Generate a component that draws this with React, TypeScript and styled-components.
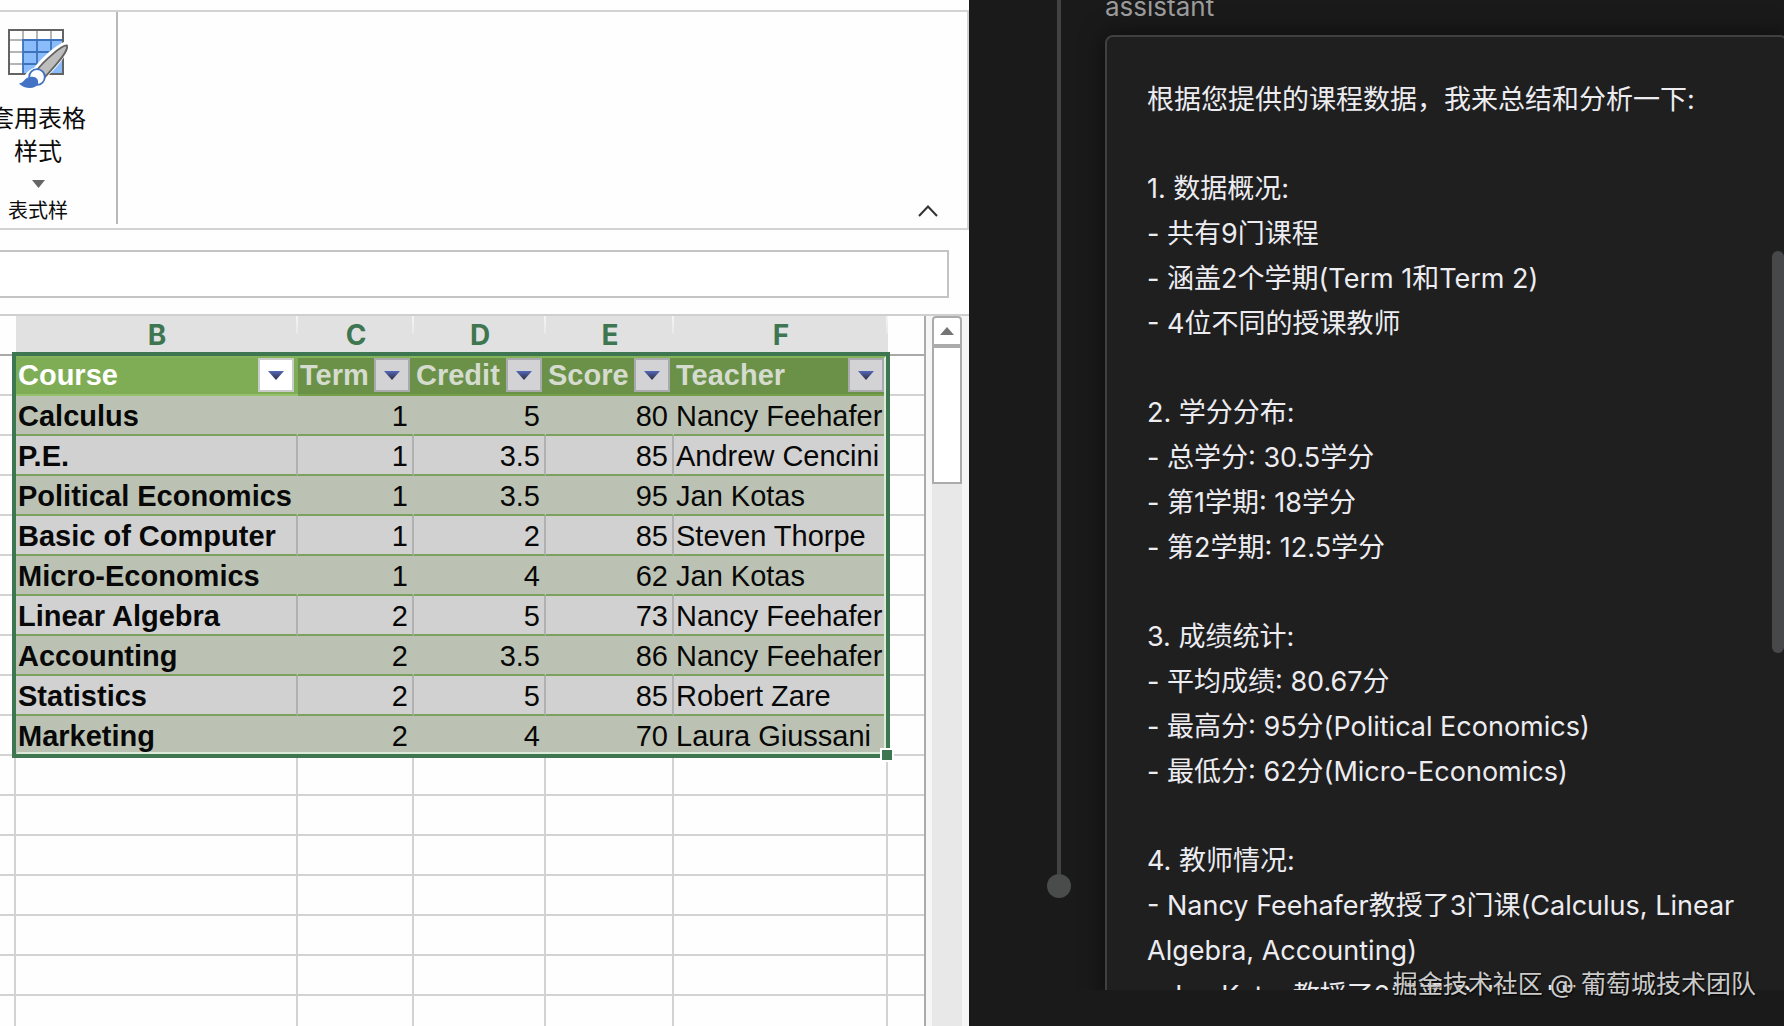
import React from 'react';
import styled, { createGlobalStyle, css } from 'styled-components';

const GlobalStyle = createGlobalStyle`
  *, *::before, *::after { box-sizing: border-box; }
  html, body { margin: 0; background: #1a1a1a; }
  button, input { font: inherit; margin: 0; }
`;

const uiFont = `Inter, "Noto Sans CJK SC", sans-serif`;
const cellFont = `"Liberation Sans", "Noto Sans CJK SC", sans-serif`;

const Page = styled.div`
  display: grid;
  grid-template-columns: minmax(0, 969fr) minmax(0, 815fr);
  height: 100vh;
  overflow: hidden;
  font-family: ${uiFont};
`;

/* ---------- Spreadsheet ---------- */

const Workbook = styled.section`
  display: flex;
  flex-direction: column;
  min-height: 0;
  overflow: hidden;
  background: #fefefe;
`;

const Ribbon = styled.div`
  display: flex;
  flex: none;
  align-items: flex-start;
  justify-content: space-between;
  height: 220px;
  margin-top: 10px;
  border: 2px solid #d2d2d2;
  border-left: 0;
`;

const RibbonGroup = styled.div`
  display: flex;
  flex-direction: column;
  align-items: center;
  width: 158px;
  height: 212px;
  margin-left: -40px;
  border-right: 2px solid #b9b9b9;
  color: #0c0c0c;
`;

const StyleButton = styled.button`
  display: flex;
  flex-direction: column;
  align-items: center;
  padding: 15px 0 0;
  border: 0;
  background: none;
  color: inherit;
  font-size: 24px;
  line-height: 33px;
`;

const StyleLabel = styled.span`
  width: 104px;
  margin: 11px 0 12px;
`;

const GroupCaption = styled.span`
  margin-top: 10px;
  font-size: 20px;
  line-height: 26px;
`;

const CollapseButton = styled.button`
  display: flex;
  align-self: flex-end;
  padding: 8px;
  margin: 0 21px 3px 0;
  border: 0;
  background: none;
`;

const FormulaBar = styled.div`
  flex: none;
  display: flex;
  height: 86px;
  padding: 20px 20px 16px 0;
  border-bottom: 2px solid #cfcfcf;
`;

const FormulaInput = styled.input`
  width: 100%;
  height: 48px;
  border: 2px solid #c4c4c4;
  border-left: 0;
  background: #fff;
  font-size: 24px;
  outline: none;
`;

const SheetArea = styled.div`
  display: flex;
  flex: 1;
  min-height: 0;
  overflow: hidden;
`;

const GridPane = styled.div`
  position: relative;
  flex: 1;
  min-width: 0;
  overflow: hidden;
  border-right: 2px solid #ababab;
`;

const Grid = styled.table`
  width: 100%;
  table-layout: fixed;
  border-collapse: separate;
  border-spacing: 0;
  font-family: ${cellFont};
  font-size: 29px;
  line-height: 34px;
  white-space: nowrap;
`;

const ColumnLetter = styled.th<{ $selected?: boolean }>`
  height: 40px;
  padding: 0;
  border-bottom: 2px solid #a9a9a9;
  font-family: ${uiFont};
  font-size: 28px;
  font-weight: 700;
  color: #3d7650;
  ${(p) =>
    p.$selected &&
    css`
      background: linear-gradient(#f4f4f4, #e8e8e8) right top / 2px 18px no-repeat, #e1e1e1;
    `}
`;

const FieldHead = styled.th<{ $active?: boolean; $blank?: boolean }>`
  height: 40px;
  padding: 0 2px;
  border-bottom: 2px solid ${(p) => (p.$blank ? '#d2d2d2' : p.$active ? '#95c06d' : '#74a04a')};
  background: ${(p) => (p.$blank ? '#fefefe' : p.$active ? '#7fad55' : '#6b9148')};
  color: ${(p) => (p.$active ? '#fff' : '#d5dbcf')};
  text-align: left;
`;

const FieldHeadInner = styled.div`
  display: flex;
  align-items: center;
  justify-content: space-between;
  padding-right: 2px;
`;

const FilterButton = styled.button<{ $active?: boolean }>`
  display: flex;
  flex: none;
  align-items: center;
  justify-content: center;
  width: 36px;
  height: 34px;
  padding: 0;
  border: 2px solid ${(p) => (p.$active ? '#c9cbc8' : '#a9aaae')};
  background: ${(p) => (p.$active ? '#fff' : '#d3d3d5')};
`;

const Cell = styled.td<{ $band?: 'green' | 'grey'; $number?: boolean }>`
  height: 40px;
  padding: 2px 4px 0 2px;
  border-right: 2px solid #d3d3d3;
  border-bottom: 2px solid #d3d3d3;
  text-align: ${(p) => (p.$number ? 'right' : 'left')};
  color: #080808;
  ${(p) =>
    p.$band === 'green' &&
    css`
      background: #bcc2b3;
      border-right-color: #bcc2b3;
      border-bottom-color: #7ca05e;
    `}
  ${(p) =>
    p.$band === 'grey' &&
    css`
      background: #d1d1d1;
      border-right-color: #b1b1b1;
      border-bottom-color: #7ca05e;
    `}
`;

const CourseCell = styled(Cell)`
  font-weight: 700;
`;

const EdgeCell = styled(Cell)`
  border-right-width: 0;
`;

const SelectionFrame = styled.div`
  position: absolute;
  top: 36px;
  left: 12px;
  width: 878px;
  height: 406px;
  border: 4px solid #3d7650;
  pointer-events: none;

  &::before {
    content: '';
    position: absolute;
    inset: 0;
    border: 2px solid #dcebd8;
    border-top-color: #83b45a;
    border-left-color: transparent;
  }
`;

const FillHandle = styled.span`
  position: absolute;
  right: -8px;
  bottom: -8px;
  width: 14px;
  height: 14px;
  border: 2px solid #fff;
  background: #3d7650;
`;

const VerticalScroll = styled.div`
  display: flex;
  flex: none;
  flex-direction: column;
  width: 43px;
  padding: 0 7px 0 6px;
  background: #f6f6f6;
`;

const Track = styled.div`
  flex: 1;
  background: #e8e8e8;
`;

const ScrollUp = styled.button`
  display: flex;
  align-items: center;
  justify-content: center;
  width: 30px;
  height: 30px;
  padding: 0;
  border: 2px solid #ababab;
  border-radius: 4px 4px 0 0;
  background: #fff;
`;

const SheetThumb = styled.div`
  height: 138px;
  border: 2px solid #ababab;
  background: #fff;
`;

/* ---------- Chat ---------- */

const Chat = styled.section`
  position: relative;
  min-height: 0;
  padding-bottom: 36px;
  background: #1a1a1a;
`;

const ChatScroll = styled.div`
  display: grid;
  grid-template-columns: 136px minmax(0, 1fr);
  height: 100%;
  overflow: hidden;
`;

const Rail = styled.div`
  display: flex;
  flex-direction: column;
  align-items: center;
  width: 24px;
  min-height: 0;
  margin: 0 0 92px 78px;
`;

const RailLine = styled.div`
  flex: 1;
  width: 4px;
  background: #424242;
`;

const RailDot = styled.div`
  width: 24px;
  height: 24px;
  border-radius: 50%;
  background: #4a4b4b;
`;

const Message = styled.article`
  min-height: 0;
  margin: -9px -4px 0 0;
`;

const Author = styled.header`
  height: 44px;
  font-size: 26px;
  line-height: 32px;
  color: #9b9b9b;
`;

const Card = styled.div`
  display: flex;
  flex-direction: column;
  gap: 44px;
  padding: 40px;
  border: 2px solid #404040;
  border-radius: 8px;
  background: #1f1f1f;
  box-shadow: 0 0 24px rgba(0, 0, 0, 0.55);
  color: #ececf1;
  font-size: 27px;
  line-height: 45px;
`;

const Line = styled.p`
  margin: 0;
`;

const ChatThumb = styled.div`
  position: absolute;
  top: 251px;
  right: 0;
  width: 12px;
  height: 402px;
  border-radius: 6px;
  background: #47484a;
`;

const Watermark = styled.footer`
  position: absolute;
  right: 28px;
  bottom: 24px;
  color: #cacaca;
  font-size: 25px;
  line-height: 36px;
  text-shadow: 1px 1px 2px #000;
`;

/* ---------- Drawings ---------- */

const FormatTableIcon = () => (
  <svg width="64" height="64" viewBox="0 0 64 64" aria-hidden="true">
    <path d="M3 3h54v44H3z" fill="#fff" />
    <path d="M17 13h40v34H17z" fill="#8abbfa" />
    <path d="M3 13H57M17 3V13M31 3V13M45 3V13M3 25H17M3 37H17" stroke="#b5b5b5" strokeWidth="2" fill="none" />
    <path d="M17 47V13H57M17 25H50M17 37H40M31 13V47M45 13V30" stroke="#3d72bd" strokeWidth="1.800" fill="none" />
    <path d="M3 3h54v44H3z" fill="none" stroke="#636363" strokeWidth="2" />
    <path d="M60 14C46 20 33 34 28 41 20 43 19 51 11 55 18 64 38 64 41 50 50 41 58 32 64 20z" fill="#fff" />
    <path d="M61 18.500C56 17.500 37 35 31.500 42.500L39 50C47 41 63 25 61 18.500z" fill="#bdbdbd" stroke="#636363" strokeWidth="1.800" strokeLinejoin="round" />
    <circle cx="31" cy="50" r="7.800" fill="#fff" stroke="#3d72bd" strokeWidth="1.800" />
    <path d="M13 56.500C18 56 18 51 24 50 30 49 33 52 32 57 29 63 18 62 13 56.500z" fill="#4472c4" />
  </svg>
);

const Triangle = ({ up, color, w, h }: { up?: boolean; color: string; w: number; h: number }) => (
  <svg width={w} height={h} viewBox={`0 0 ${w} ${h}`} aria-hidden="true">
    <path d={up ? `M0 ${h}H${w}L${w / 2} 0z` : `M0 0H${w}L${w / 2} ${h}z`} fill={color} />
  </svg>
);

const FilterArrow = () => (
  <svg width="16" height="9" viewBox="0 0 16 9" aria-hidden="true">
    <defs>
      <linearGradient id="filterArrow" x1="0" y1="0" x2="0" y2="1">
        <stop offset="0" stopColor="#5468b8" />
        <stop offset="1" stopColor="#2d2d3c" />
      </linearGradient>
    </defs>
    <path d="M0 0H16L8 9z" fill="url(#filterArrow)" />
  </svg>
);

/* ---------- Data ---------- */

const letters = ['B', 'C', 'D', 'E', 'F'];
const fields = ['Course', 'Term', 'Credit', 'Score', 'Teacher'];
const courses: [string, number, number, number, string][] = [
  ['Calculus', 1, 5, 80, 'Nancy Feehafer'],
  ['P.E.', 1, 3.5, 85, 'Andrew Cencini'],
  ['Political Economics', 1, 3.5, 95, 'Jan Kotas'],
  ['Basic of Computer', 1, 2, 85, 'Steven Thorpe'],
  ['Micro-Economics', 1, 4, 62, 'Jan Kotas'],
  ['Linear Algebra', 2, 5, 73, 'Nancy Feehafer'],
  ['Accounting', 2, 3.5, 86, 'Nancy Feehafer'],
  ['Statistics', 2, 5, 85, 'Robert Zare'],
  ['Marketing', 2, 4, 70, 'Laura Giussani'],
];
const emptyRows = Array.from({ length: 7 }, (_, i) => i);

const answer = [
  ['根据您提供的课程数据，我来总结和分析一下:'],
  ['1. 数据概况:', '- 共有9门课程', '- 涵盖2个学期(Term 1和Term 2)', '- 4位不同的授课教师'],
  ['2. 学分分布:', '- 总学分: 30.5学分', '- 第1学期: 18学分', '- 第2学期: 12.5学分'],
  ['3. 成绩统计:', '- 平均成绩: 80.67分', '- 最高分: 95分(Political Economics)', '- 最低分: 62分(Micro-Economics)'],
  [
    '4. 教师情况:',
    '- Nancy Feehafer教授了3门课(Calculus, Linear Algebra, Accounting)',
    '- Jan Kotas教授了2门课(Political Economics, Micro-Economics)',
  ],
];

export default function App() {
  return (
    <Page>
      <GlobalStyle />
      <Workbook>
        <Ribbon>
          <RibbonGroup>
            <StyleButton type="button">
              <FormatTableIcon />
              <StyleLabel>套用表格 样式</StyleLabel>
              <Triangle color="#666" w={13} h={8} />
            </StyleButton>
            <GroupCaption>表式样</GroupCaption>
          </RibbonGroup>
          <CollapseButton type="button" aria-label="Collapse ribbon">
            <svg width="20" height="12" viewBox="0 0 20 12" fill="none" stroke="#333" strokeWidth="2" aria-hidden="true">
              <path d="M1 11L10 1.500 19 11" />
            </svg>
          </CollapseButton>
        </Ribbon>
        <FormulaBar>
          <FormulaInput aria-label="Formula" />
        </FormulaBar>
        <SheetArea>
          <GridPane>
            <Grid>
              <colgroup>
                <col width="16" />
                <col width="282" />
                <col width="116" />
                <col width="132" />
                <col width="128" />
                <col width="214" />
                <col />
              </colgroup>
              <thead>
                <tr>
                  <ColumnLetter />
                  {letters.map((l) => (
                    <ColumnLetter key={l} $selected scope="col">{l}</ColumnLetter>
                  ))}
                  <ColumnLetter />
                </tr>
                <tr>
                  <FieldHead $blank />
                  {fields.map((f, i) => (
                    <FieldHead key={f} $active={i === 0} scope="col">
                      <FieldHeadInner>
                        {f}
                        <FilterButton type="button" $active={i === 0} aria-label={`Filter ${f}`}>
                          <FilterArrow />
                        </FilterButton>
                      </FieldHeadInner>
                    </FieldHead>
                  ))}
                  <FieldHead $blank />
                </tr>
              </thead>
              <tbody>
                {courses.map(([course, term, credit, score, teacher], i) => {
                  const band = i % 2 ? 'grey' : 'green';
                  return (
                    <tr key={course}>
                      <Cell />
                      <CourseCell $band={band}>{course}</CourseCell>
                      <Cell $band={band} $number>{term}</Cell>
                      <Cell $band={band} $number>{credit}</Cell>
                      <Cell $band={band} $number>{score}</Cell>
                      <Cell $band={band}>{teacher}</Cell>
                      <EdgeCell />
                    </tr>
                  );
                })}
                {emptyRows.map((r) => (
                  <tr key={r}>
                    <Cell />
                    {letters.map((l) => (
                      <Cell key={l} />
                    ))}
                    <EdgeCell />
                  </tr>
                ))}
              </tbody>
            </Grid>
            <SelectionFrame>
              <FillHandle />
            </SelectionFrame>
          </GridPane>
          <VerticalScroll>
            <ScrollUp type="button" aria-label="Scroll up">
              <Triangle up color="#757575" w={14} h={8} />
            </ScrollUp>
            <SheetThumb />
            <Track />
          </VerticalScroll>
        </SheetArea>
      </Workbook>

      <Chat>
        <ChatScroll>
          <Rail>
            <RailLine />
            <RailDot />
          </Rail>
          <Message>
            <Author>assistant</Author>
            <Card>
              {answer.map((section) => (
                <div key={section[0]}>
                  {section.map((line) => (
                    <Line key={line}>{line}</Line>
                  ))}
                </div>
              ))}
            </Card>
          </Message>
        </ChatScroll>
        <ChatThumb />
        <Watermark>掘金技术社区 @ 葡萄城技术团队</Watermark>
      </Chat>
    </Page>
  );
}
